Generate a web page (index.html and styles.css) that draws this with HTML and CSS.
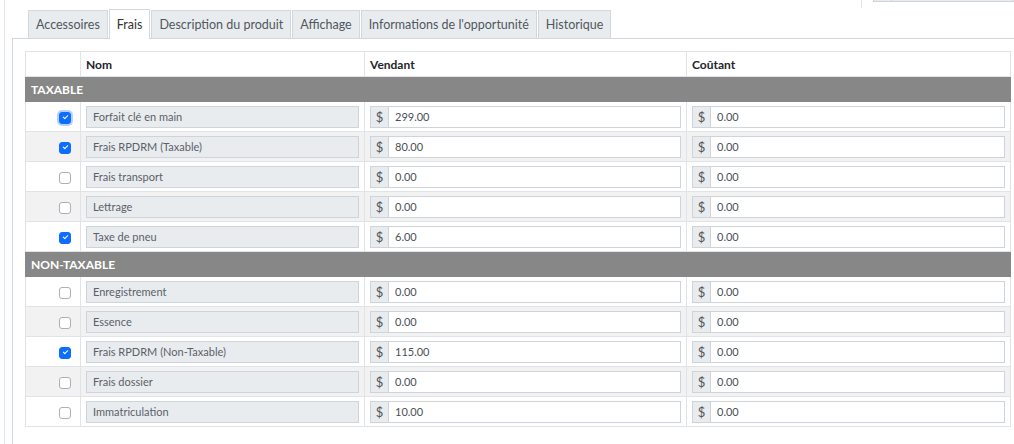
FILE: index.html
```html
<!DOCTYPE html>
<html lang="fr">
<head>
  <meta charset="UTF-8">
  <meta name="viewport" content="width=device-width, initial-scale=1.0">
  <title>Frais</title>
  <link rel="stylesheet" href="styles.css">
</head>
<body>
  <div class="page">
    <div class="top-strip">
      <div class="top-divider"></div>
      <div class="top-box"><span class="top-box-addon"></span></div>
    </div>

    <ul class="tabs">
      <li class="tab">Accessoires</li>
      <li class="tab active">Frais</li>
      <li class="tab">Description du produit</li>
      <li class="tab">Affichage</li>
      <li class="tab">Informations de l'opportunité</li>
      <li class="tab">Historique</li>
    </ul>

    <div class="panel">
      <table class="fees">
        <colgroup>
          <col class="col-check">
          <col class="col-name">
          <col class="col-sell">
          <col class="col-cost">
        </colgroup>
        <thead>
          <tr>
            <th></th>
            <th>Nom</th>
            <th>Vendant</th>
            <th>Coûtant</th>
          </tr>
        </thead>
        <tbody id="taxable"></tbody>
        <tbody id="nontaxable"></tbody>
      </table>
    </div>
  </div>

  <script>
    const TAXABLE = [
      { name: 'Forfait clé en main', sell: '299.00', cost: '0.00', on: true, focus: true },
      { name: 'Frais RPDRM (Taxable)', sell: '80.00', cost: '0.00', on: true },
      { name: 'Frais transport', sell: '0.00', cost: '0.00', on: false },
      { name: 'Lettrage', sell: '0.00', cost: '0.00', on: false },
      { name: 'Taxe de pneu', sell: '6.00', cost: '0.00', on: true }
    ];
    const NON_TAXABLE = [
      { name: 'Enregistrement', sell: '0.00', cost: '0.00', on: false },
      { name: 'Essence', sell: '0.00', cost: '0.00', on: false },
      { name: 'Frais RPDRM (Non-Taxable)', sell: '115.00', cost: '0.00', on: true },
      { name: 'Frais dossier', sell: '0.00', cost: '0.00', on: false },
      { name: 'Immatriculation', sell: '10.00', cost: '0.00', on: false }
    ];

    function money(value) {
      return `<div class="input-group"><span class="addon">$</span><input class="field" value="${value}"></div>`;
    }

    function fillSection(id, title, rows) {
      let html = `<tr class="section"><td colspan="4">${title}</td></tr>`;
      rows.forEach(row => {
        const cls = 'check' + (row.on ? ' checked' : '') + (row.focus ? ' focus' : '');
        html += `<tr>
          <td class="cell-check"><span class="${cls}"></span></td>
          <td><input class="field readonly" value="${row.name}" readonly></td>
          <td>${money(row.sell)}</td>
          <td>${money(row.cost)}</td>
        </tr>`;
      });
      document.getElementById(id).innerHTML = html;
    }

    fillSection('taxable', 'TAXABLE', TAXABLE);
    fillSection('nontaxable', 'NON-TAXABLE', NON_TAXABLE);
  </script>
</body>
</html>
```

FILE: styles.css
```css
* {
  box-sizing: border-box;
  font-family: Lato, 'Open Sans', sans-serif;
}
body {
  margin: 0;
  background: #fff;
  overflow: hidden;
}
.page {
  margin-left: 4px;
  border-left: 1px solid #e3e6ea;
  height: 444px;
  padding-left: 7px;
}
.top-strip {
  height: 10px;
  display: flex;
  justify-content: flex-end;
  align-items: flex-start;
}
.top-divider {
  width: 1px;
  height: 8px;
  background: #e1e4e8;
  margin-right: 11px;
}
.top-box {
  width: 141px;
  height: 3px;
  margin-top: -1px;
  border: 1px solid #ced4da;
  border-top: none;
  background: #e9ecef;
  display: flex;
}
.top-box-addon {
  width: 18px;
  border-right: 1px solid #ced4da;
}
/* Tabs */
.tabs {
  list-style: none;
  margin: 0;
  padding: 0 0 0 16px;
  display: flex;
  align-items: flex-end;
  height: 28px;
}
.tab {
  height: 28px;
  padding: 0 7px;
  margin-right: 1px;
  display: flex;
  align-items: center;
  font-size: 12.5px;
  color: #50575e;
  background: #e9ecef;
  border: 1px solid #d3d8de;
  border-bottom: none;
}
.tab.active {
  background: #fff;
  height: 30px;
  margin-bottom: -1px;
  padding-bottom: 1px;
  z-index: 1;
  color: #333;
}
/* Panel */
.panel {
  border-top: 1px solid #d3d8de;
  border-left: 1px solid #d3d8de;
  padding: 12px 4px 0 12px;
  height: 406px;
}
.fees {
  border-collapse: collapse;
  width: 985px;
  table-layout: fixed;
  font-size: 11px;
  color: #495057;
}
.col-check { width: 55px; }
.col-name { width: 284px; }
.col-sell { width: 322px; }
.col-cost { width: 324px; }
.fees th,
.fees td {
  border: 1px solid #e0e3e7;
  padding: 3px 5px;
  vertical-align: middle;
}
.fees th {
  height: 25px;
  text-align: left;
  font-size: 12px;
  font-weight: bold;
  color: #212529;
}
.fees td {
  height: 30px;
}
.fees tr.section td {
  height: 25px;
  background: #878787;
  border-color: #878787;
  color: #fff;
  font-weight: bold;
  font-size: 12px;
  padding: 0 5px;
}
.fees tbody tr:nth-child(odd):not(.section) td {
  background: #f2f2f2;
}
.cell-check {
  text-align: right;
  padding-right: 9px !important;
}
.check {
  display: inline-block;
  width: 12px;
  height: 12px;
  border: 1px solid #a9b0b8;
  border-radius: 3px;
  background: #fff;
  vertical-align: middle;
  position: relative;
}
.check.checked {
  background: #0d6efd;
  border-color: #0d6efd;
}
.check.checked::after {
  content: '';
  position: absolute;
  left: 3px;
  top: 2px;
  width: 4px;
  height: 2px;
  border-left: 1.5px solid #fff;
  border-bottom: 1.5px solid #fff;
  transform: rotate(-45deg);
}
.check.focus {
  box-shadow: 0 0 0 2px #b6d1fb;
}
.field {
  display: block;
  width: 100%;
  height: 22px;
  border: 1px solid #ced4da;
  background: #fff;
  color: #495057;
  font-size: 11px;
  padding: 0 6px;
  outline: none;
}
.field.readonly {
  background: #e9ecef;
  color: #5a6168;
}
.input-group {
  display: flex;
  height: 22px;
}
.addon {
  width: 18px;
  flex: none;
  display: flex;
  align-items: center;
  justify-content: center;
  background: #e9ecef;
  border: 1px solid #ced4da;
  border-right: none;
  font-size: 13px;
  color: #555;
}
.input-group .field {
  flex: 1;
  width: auto;
  min-width: 0;
}
```
